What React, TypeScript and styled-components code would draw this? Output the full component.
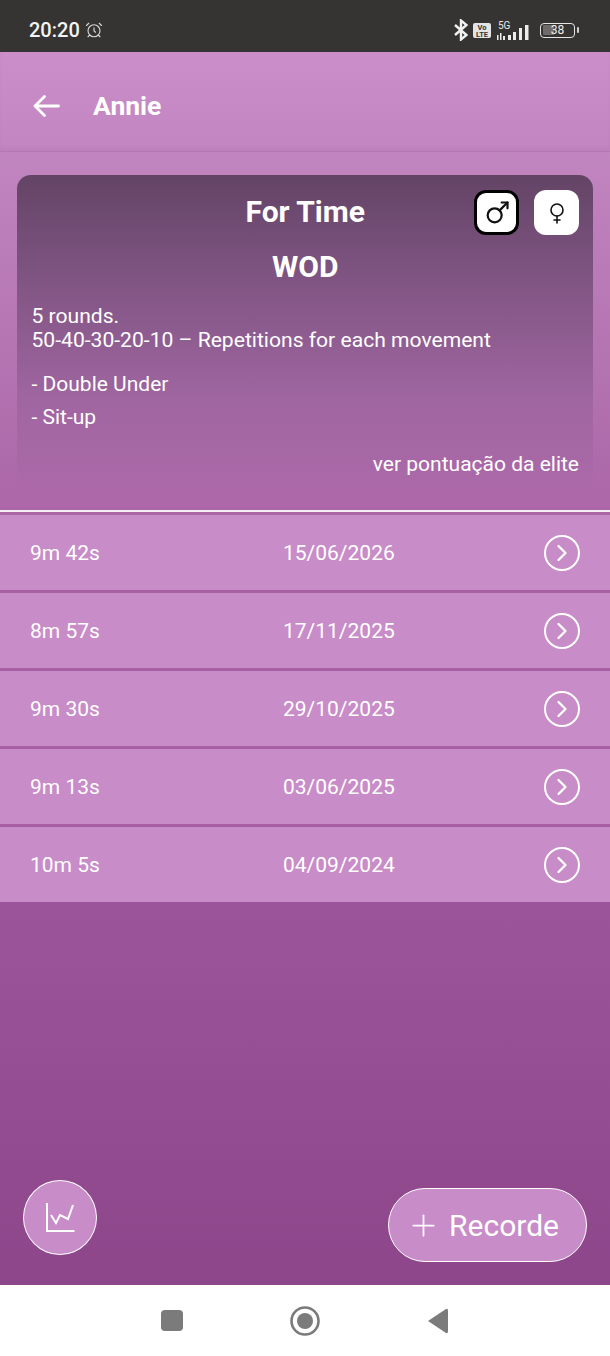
import styled, { createGlobalStyle } from 'styled-components';
import { Mars, Venus, ChevronRight, Plus, AlarmClock } from 'lucide-react';

const GlobalStyle = createGlobalStyle`
  html, body {
    margin: 0;
    padding: 0;
    background: #fff;
  }
  body {
    font-family: Roboto, "Liberation Sans", sans-serif;
  }
  * {
    box-sizing: border-box;
  }
`;

const Page = styled.div`
  width: 610px;
  height: 1356px;
  display: flex;
  flex-direction: column;
  overflow: hidden;
`;

const StatusBar = styled.div`
  height: 52px;
  flex-shrink: 0;
  background: #353433;
  color: #f4f4f4;
  display: flex;
  align-items: center;
  justify-content: space-between;
  padding: 8px 31px 0 29px;
`;

const StatusLeft = styled.div`
  display: flex;
  align-items: center;
  gap: 5px;
  font-size: 20px;
  font-weight: 500;
`;

const StatusRight = styled.div`
  display: flex;
  align-items: center;
  gap: 5px;
`;

const VoLte = styled.div`
  width: 18px;
  height: 15px;
  border-radius: 2px;
  background: #e4e4e4;
  color: #353433;
  font-size: 7.5px;
  line-height: 7px;
  font-weight: 700;
  text-align: center;
  padding-top: 1px;
`;

const Signal = styled.div`
  width: 36px;
  height: 18px;
  margin-left: 1px;
  margin-top: 2px;
  position: relative;
`;

const FiveG = styled.span`
  position: absolute;
  left: 1px;
  top: -1px;
  font-size: 10px;
  line-height: 10px;
  color: #e8e8e8;
`;

const Battery = styled.div`
  width: 35px;
  height: 15px;
  border: 1.5px solid #e4e4e4;
  border-radius: 4px;
  margin-left: 2px;
  padding: 1.5px;
  position: relative;
`;

const BatteryFill = styled.div`
  width: 38%;
  height: 100%;
  background: #6d6c6b;
  border-radius: 1px;
`;

const BatteryLabel = styled.span`
  position: absolute;
  inset: 0;
  text-align: center;
  font-size: 12px;
  line-height: 12px;
  color: #f0f0f0;
`;

const BatteryCap = styled.div`
  width: 2px;
  height: 6px;
  background: #cfcfcf;
  border-radius: 1px;
  margin-left: -3px;
`;

const Main = styled.div`
  flex: 1;
  display: flex;
  flex-direction: column;
  background: linear-gradient(180deg, #cb8eca 0%, #c084bf 9%, #ab67a8 37%, #9b5499 70%, #8e468b 100%);
`;

const Header = styled.header`
  height: 100px;
  flex-shrink: 0;
  display: flex;
  align-items: center;
  gap: 33px;
  padding: 8px 31px 0 33px;
  color: #fff;
  border-bottom: 1px solid #b377b1;
  box-shadow: inset 0 -3px 3px rgba(120, 60, 120, 0.06);
`;

const Title = styled.h1`
  margin: 0;
  font-size: 26.5px;
  font-weight: 700;
`;

const Card = styled.section`
  margin: 23px 17px 0;
  height: 315px;
  padding: 15px 14px 0 14.5px;
  border-radius: 14px;
  background: linear-gradient(180deg, #634465 0%, #7d5380 30%, #a066a1 72%, #ac69a9 100%);
  color: #fff;
  display: flex;
  flex-direction: column;
  position: relative;
`;

const CardHeading = styled.h2`
  margin: 0;
  font-size: 30px;
  line-height: 44px;
  font-weight: 700;
  text-align: center;
`;

const CardSub = styled(CardHeading)`
  margin-top: 11px;
`;

const GenderPicker = styled.div`
  position: absolute;
  top: 15px;
  right: 14px;
  display: flex;
  gap: 15px;
`;

const GenderButton = styled.button<{ $active?: boolean }>`
  width: 45px;
  height: 45px;
  padding: 0;
  background: #fff;
  border: ${p => (p.$active ? '3px solid #000' : 'none')};
  border-radius: 12px;
  color: #111;
  display: flex;
  align-items: center;
  justify-content: center;
`;

const Description = styled.p`
  margin: 15px 0 0;
  font-size: 21.1px;
  line-height: 24px;
`;

const Movements = styled.ul`
  list-style: none;
  margin: 16px 0 0;
  padding: 0;
  font-size: 21px;
  line-height: 33px;
`;

const EliteLink = styled.a`
  margin-top: 18px;
  align-self: flex-end;
  font-size: 21px;
  line-height: 24px;
`;

const Divider = styled.div`
  height: 2px;
  background: #f6eef6;
  margin-top: 20px;
`;

const List = styled.div`
  margin-top: 3px;
  display: flex;
  flex-direction: column;
  gap: 3px;
  background: #a85fa3;
`;

const Row = styled.div`
  height: 75px;
  display: grid;
  grid-template-columns: 253px 1fr auto;
  align-items: center;
  padding: 0 30px;
  background: #c88cc8;
  color: #fff;
  font-size: 21px;
`;

const RowAction = styled.div`
  width: 36px;
  height: 36px;
  border: 2.5px solid #fff;
  border-radius: 50%;
  display: flex;
  align-items: center;
  justify-content: center;
`;

const Footer = styled.div`
  margin-top: auto;
  display: flex;
  justify-content: space-between;
  align-items: flex-start;
  padding: 0 23px 23px;
`;

const ChartButton = styled.button`
  width: 74px;
  height: 75px;
  padding: 0;
  border-radius: 50%;
  border: 1.5px solid #fff;
  background: #c88cc8;
  display: flex;
  align-items: center;
  justify-content: center;
`;

const RecordButton = styled.button`
  margin-top: 8px;
  width: 199px;
  height: 74px;
  border-radius: 37px;
  border: 1.5px solid #fff;
  background: #c88cc8;
  color: #fff;
  font-family: inherit;
  font-size: 30px;
  display: flex;
  align-items: center;
  justify-content: center;
  gap: 8px;
  padding: 0 10px 0 0;
`;

const NavBar = styled.nav`
  height: 71px;
  flex-shrink: 0;
  background: #fff;
  display: flex;
  align-items: center;
  justify-content: center;
`;

const NavSlot = styled.div`
  width: 133px;
  display: flex;
  justify-content: center;
`;

const records = [
  { time: '9m 42s', date: '15/06/2026' },
  { time: '8m 57s', date: '17/11/2025' },
  { time: '9m 30s', date: '29/10/2025' },
  { time: '9m 13s', date: '03/06/2025' },
  { time: '10m 5s', date: '04/09/2024' },
];

const BackArrow = () => (
  <svg width="27" height="22" viewBox="0 0 27 22" fill="none" stroke="#fff" strokeWidth="2.8" strokeLinecap="round" strokeLinejoin="round">
    <path d="M25.5 11H2M11.5 1.5 2 11l9.5 9.5" />
  </svg>
);

const BluetoothIcon = () => (
  <svg width="14" height="22" viewBox="0 0 14 22" fill="none" stroke="#f2f2f2" strokeWidth="2.4">
    <path d="M1 6 L12.5 16 L7 20.5 V1.5 L12.5 6 L1 16" />
  </svg>
);

const SignalBars = () => (
  <svg width="36" height="18" viewBox="0 0 36 18" fill="#ececec">
    <rect x="0" y="13" width="1.5" height="5" />
    <rect x="3" y="11" width="1.5" height="7" />
    <rect x="6" y="14" width="2" height="4" />
    <rect x="11" y="13" width="3" height="5" />
    <rect x="16" y="10" width="3" height="8" />
    <rect x="22" y="6" width="3" height="12" />
    <rect x="28" y="3" width="3.5" height="15" />
  </svg>
);

const ChartIcon = () => (
  <svg width="29" height="29" viewBox="0 0 29 29" fill="none" stroke="#fff" strokeWidth="2">
    <path d="M1 0 V28 H28.5" />
    <path d="M5 12 L10 20 L14 12 L22 16 L27 2" strokeWidth="2" />
  </svg>
);

export default function App() {
  return (
    <Page>
      <GlobalStyle />
      <StatusBar>
        <StatusLeft>
          20:20
          <AlarmClock size={18} strokeWidth={1.5} color="#d8d8d8" />
        </StatusLeft>
        <StatusRight>
          <BluetoothIcon />
          <VoLte>
            Vo
            <br />
            LTE
          </VoLte>
          <Signal>
            <FiveG>5G</FiveG>
            <SignalBars />
          </Signal>
          <Battery>
            <BatteryFill />
            <BatteryLabel>38</BatteryLabel>
          </Battery>
          <BatteryCap />
        </StatusRight>
      </StatusBar>
      <Main>
        <Header>
          <BackArrow />
          <Title>Annie</Title>
        </Header>
        <Card>
          <CardHeading>For Time</CardHeading>
          <GenderPicker>
            <GenderButton $active>
              <Mars size={28} strokeWidth={1.9} />
            </GenderButton>
            <GenderButton>
              <Venus size={24} strokeWidth={1.6} />
            </GenderButton>
          </GenderPicker>
          <CardSub>WOD</CardSub>
          <Description>
            5 rounds.
            <br />
            50-40-30-20-10 – Repetitions for each movement
          </Description>
          <Movements>
            <li>- Double Under</li>
            <li>- Sit-up</li>
          </Movements>
          <EliteLink>ver pontuação da elite</EliteLink>
        </Card>
        <Divider />
        <List>
          {records.map(r => (
            <Row key={r.date}>
              <span>{r.time}</span>
              <span>{r.date}</span>
              <RowAction>
                <ChevronRight size={28} strokeWidth={2} color="#fff" />
              </RowAction>
            </Row>
          ))}
        </List>
        <Footer>
          <ChartButton>
            <ChartIcon />
          </ChartButton>
          <RecordButton>
            <Plus size={35} strokeWidth={1.2} />
            Recorde
          </RecordButton>
        </Footer>
      </Main>
      <NavBar>
        <NavSlot>
          <svg width="22" height="21" viewBox="0 0 22 21">
            <rect width="22" height="21" rx="4" fill="#7b7b7b" />
          </svg>
        </NavSlot>
        <NavSlot>
          <svg width="30" height="30" viewBox="0 0 30 30">
            <circle cx="15" cy="15" r="13.5" fill="none" stroke="#7b7b7b" strokeWidth="2.6" />
            <circle cx="15" cy="15" r="8" fill="#7b7b7b" />
          </svg>
        </NavSlot>
        <NavSlot>
          <svg width="22" height="26" viewBox="0 0 22 26">
            <path d="M1 13 L19 1 Q21 0 21 3 V23 Q21 26 19 25 Z" fill="#7b7b7b" />
          </svg>
        </NavSlot>
      </NavBar>
    </Page>
  );
}
